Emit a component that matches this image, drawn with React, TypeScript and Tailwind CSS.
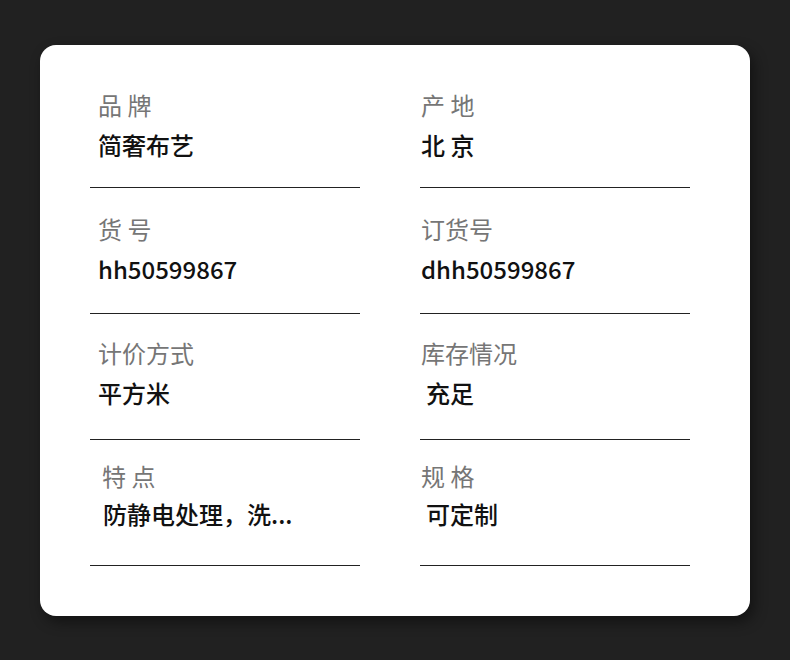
const items = [
  { label: '品 牌', value: '简奢布艺', pt: 'pt-[31px]', mt: 'mt-4', lx: 'pl-2', vx: 'pl-2' },
  { label: '产 地', value: '北 京', pt: 'pt-[31px]', mt: 'mt-4', lx: 'pl-px', vx: 'pl-px' },
  { label: '货 号', value: 'hh50599867', pt: 'pt-[29px]', mt: 'mt-4', lx: 'pl-2', vx: 'pl-2' },
  { label: '订货号', value: 'dhh50599867', pt: 'pt-[29px]', mt: 'mt-4', lx: 'pl-px', vx: 'pl-px' },
  { label: '计价方式', value: '平方米', pt: 'pt-[27px]', mt: 'mt-4', lx: 'pl-2', vx: 'pl-2' },
  { label: '库存情况', value: '充足', pt: 'pt-[27px]', mt: 'mt-4', lx: 'pl-px', vx: 'pl-1.5' },
  { label: '特 点', value: '防静电处理，洗...', pt: 'pt-6', mt: 'mt-[14px]', lx: 'pl-3', vx: 'pl-[13px]' },
  { label: '规 格', value: '可定制', pt: 'pt-6', mt: 'mt-[14px]', lx: 'pl-px', vx: 'pl-1.5' },
];

export default function App() {
  return (
    <div
      className="min-h-[660px] bg-[#212121] pl-10 pt-[45px]"
      style={{ fontFamily: '"Noto Sans CJK SC", "Noto Sans", sans-serif' }}
    >
      <div className="w-[710px] h-[571px] bg-white rounded-2xl shadow-[4px_6px_14px_rgba(0,0,0,0.45)] pl-[50px] pr-[60px] pt-[17px]">
        <div className="grid grid-cols-[270px_270px] gap-x-[60px]">
          {items.map((it) => (
            <div key={it.label} className={`h-[126px] border-b border-[#222] ${it.pt}`}>
              <div className={`text-[24px] leading-6 text-[#767676] ${it.lx}`}>{it.label}</div>
              <div className={`${it.mt} text-[24px] leading-6 font-medium text-[#111] ${it.vx}`}>
                {it.value}
              </div>
            </div>
          ))}
        </div>
      </div>
    </div>
  );
}
